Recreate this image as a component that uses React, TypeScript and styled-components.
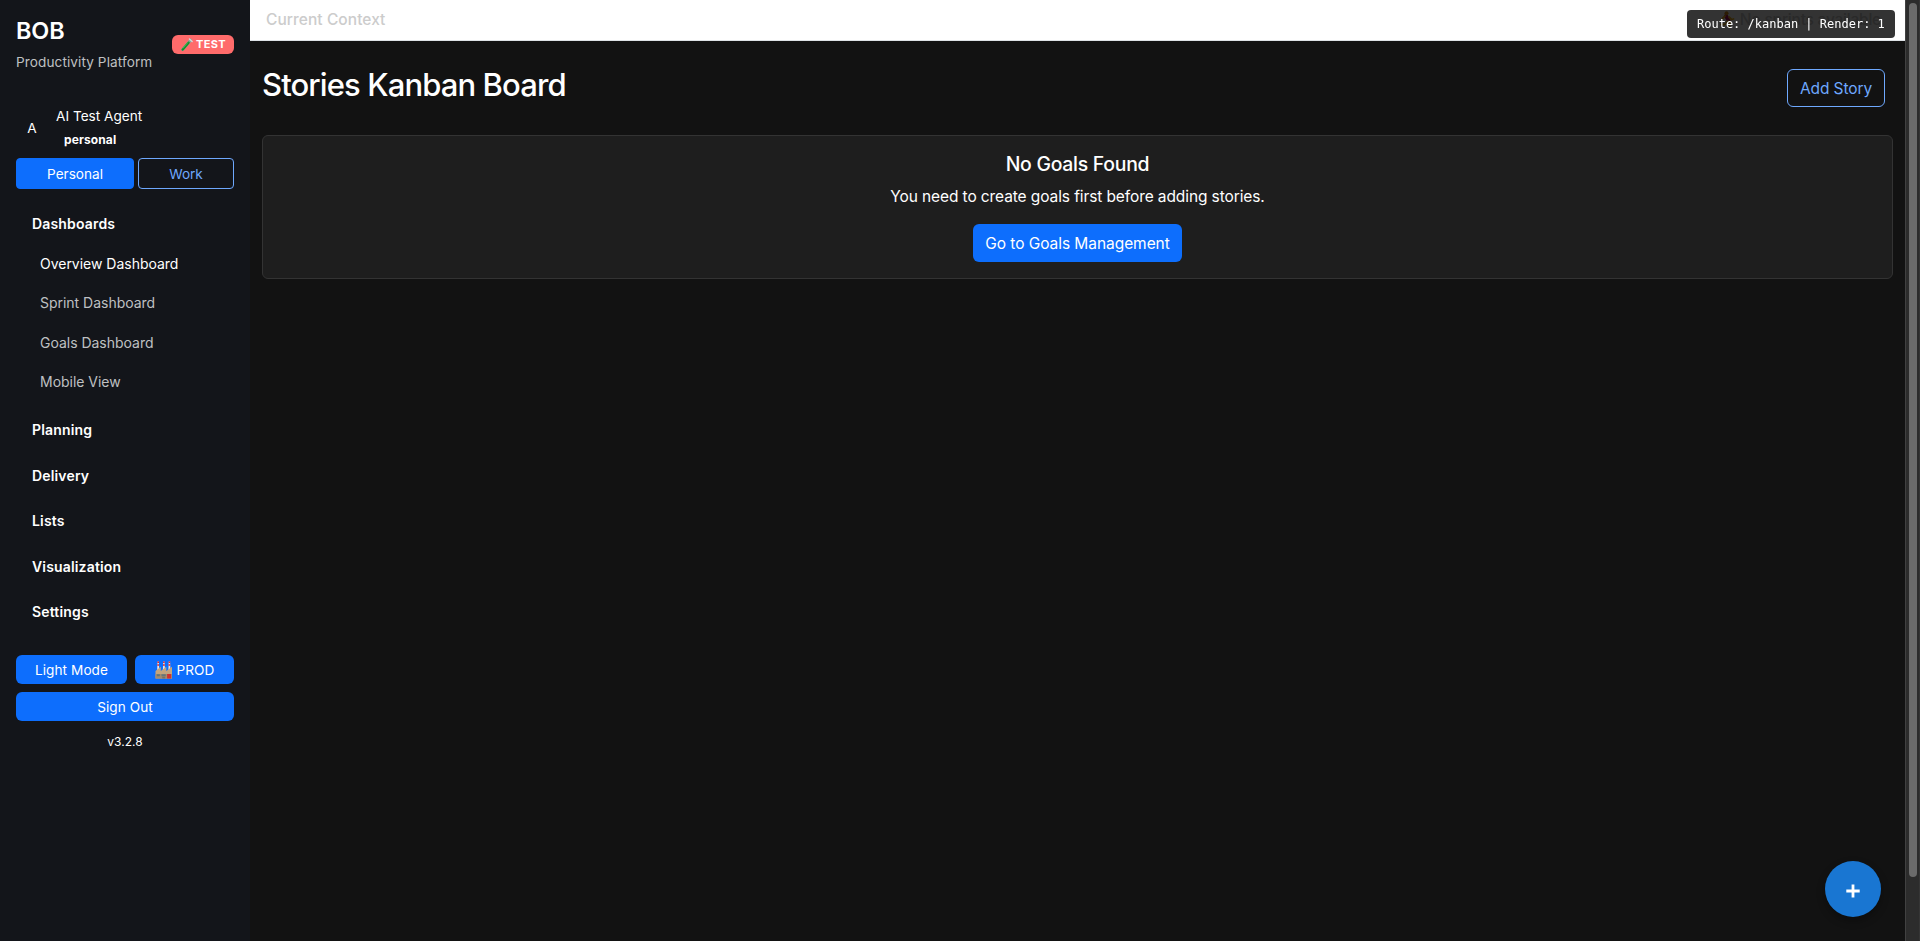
import React from 'react';
import styled, { createGlobalStyle, css } from 'styled-components';

const GlobalStyle = createGlobalStyle`
  *, *::before, *::after { box-sizing: border-box; }
  body {
    margin: 0;
    background: #121212;
    color: #fff;
    font-family: Inter, "Liberation Sans", sans-serif;
    font-size: 15.5px;
    line-height: 24px;
    overflow: hidden;
  }
  h1, h2, h3, p { margin: 0; }
  button { font-family: inherit; cursor: pointer; }
`;

const Shell = styled.div`
  display: flex;
  height: 941px;
`;

/* ---------- Sidebar ---------- */

const Sidebar = styled.aside`
  display: flex;
  flex-direction: column;
  flex: 0 0 250px;
  padding: 16px;
  background: #13151a;
`;

const BrandRow = styled.header`
  display: flex;
  align-items: center;
  justify-content: space-between;
  height: 57px;
`;

const BrandName = styled.h2`
  margin-bottom: 7px;
  font-size: 23.4px;
  font-weight: 600;
  line-height: 29px;
  letter-spacing: -0.1px;
`;

const BrandTagline = styled.p`
  color: #bfc0c2;
  font-size: 13.6px;
  line-height: 21px;
  letter-spacing: 0.09px;
`;

const EnvBadge = styled.span`
  display: flex;
  align-items: center;
  justify-content: center;
  gap: 2px;
  width: 62px;
  height: 19px;
  border-radius: 6px;
  background: #ff6b6b;
  font-size: 11px;
  font-weight: 700;
  line-height: 19px;
  letter-spacing: 0.32px;
`;

const UserRow = styled.div`
  display: flex;
  align-items: center;
  gap: 8px;
  height: 44px;
  margin-top: 33px;
`;

const Avatar = styled.span`
  width: 32px;
  text-align: center;
  font-size: 13.6px;
  line-height: 32px;
`;

const UserName = styled.div`
  font-size: 13.6px;
  line-height: 21px;
  letter-spacing: 0.02px;
`;

const PersonaTag = styled.div`
  padding: 3px 8px 0;
  font-size: 12px;
  font-weight: 700;
  line-height: 20px;
  letter-spacing: 0.12px;
`;

const PersonaSwitch = styled.div`
  display: flex;
  gap: 4px;
  margin-top: 8px;
`;

const PersonaButton = styled.button<{ $active?: boolean }>`
  flex: 0 0 ${(p) => (p.$active ? 118 : 96)}px;
  height: 31px;
  padding: 1px 0 0;
  border: 1px solid ${(p) => (p.$active ? '#0d6efd' : '#6ea8fe')};
  border-radius: 4px;
  background: ${(p) => (p.$active ? '#0d6efd' : 'transparent')};
  color: ${(p) => (p.$active ? '#fff' : '#6ea8fe')};
  font-size: 13.6px;
  line-height: 28px;
`;

const Nav = styled.nav`
  display: flex;
  flex-direction: column;
  gap: 4px;
  margin-top: 14px;
`;

const NavGroup = styled.section``;

const NavHeading = styled.h3`
  padding: 10px 16px;
  font-size: 14px;
  font-weight: 600;
  line-height: 21.4px;
  letter-spacing: 0.16px;
`;

const NavList = styled.div`
  margin-top: -0.4px;
  padding-bottom: 3.8px;
`;

const NavLink = styled.a<{ $active?: boolean }>`
  display: block;
  padding: 9px 24px;
  color: ${(p) => (p.$active ? '#fff' : '#bfc0c2')};
  font-size: 14px;
  line-height: 21.4px;
  letter-spacing: -0.02px;
`;

const SidebarActions = styled.div`
  display: grid;
  grid-template-columns: 111px 99px;
  gap: 8px;
  margin-top: 22.6px;
`;

const ActionButton = styled.button<{ $wide?: boolean }>`
  display: flex;
  align-items: center;
  justify-content: center;
  gap: 4px;
  height: 29px;
  padding: 0;
  border: 0;
  border-radius: 6px;
  background: #0d6efd;
  color: #fff;
  font-size: 13.6px;
  letter-spacing: 0.07px;
  ${(p) => p.$wide && css`grid-column: 1 / -1;`}
`;

const Version = styled.div`
  margin-top: 11px;
  text-align: center;
  font-size: 12px;
  line-height: 20px;
`;

/* ---------- Main area ---------- */

const Main = styled.main`
  flex: 1;
  min-width: 0;
`;

const ContextBar = styled.div`
  display: flex;
  align-items: center;
  justify-content: space-between;
  height: 41px;
  padding: 0 24px 0 16px;
  border-bottom: 1px solid #dee2e6;
  background: #fff;
  color: #ccc;
  font-weight: 500;
`;

const ContextLabel = styled.span`
  padding-bottom: 1px;
  letter-spacing: 0.06px;
`;

const SprintStatus = styled.span`
  display: flex;
  align-items: center;
  gap: 4px;
  letter-spacing: -0.22px;
`;

const Page = styled.div`
  padding: 28px 12px 0;
`;

const PageHeader = styled.div`
  display: flex;
  justify-content: space-between;
  height: 66px;
  padding-right: 8px;
`;

const PageTitle = styled.h1`
  font-size: 31px;
  font-weight: 500;
  line-height: 32px;
  letter-spacing: -0.89px;
`;

const OutlineButton = styled.button`
  width: 98px;
  height: 38px;
  padding: 0;
  border: 1px solid #6ea8fe;
  border-radius: 6px;
  background: transparent;
  color: #6ea8fe;
  font-size: 15.5px;
  letter-spacing: -0.1px;
`;

const EmptyCard = styled.section`
  display: flex;
  flex-direction: column;
  align-items: center;
  height: 144px;
  padding-top: 16px;
  border: 1px solid #333;
  border-radius: 6px;
  background: #1e1e1e;
`;

const EmptyTitle = styled.h2`
  margin-bottom: 9px;
  font-size: 19.4px;
  font-weight: 500;
  line-height: 24px;
  letter-spacing: -0.25px;
`;

const EmptyText = styled.p`
  margin-bottom: 15px;
  letter-spacing: -0.1px;
`;

const PrimaryButton = styled.button`
  width: 209px;
  height: 38px;
  padding: 0;
  border: 0;
  border-radius: 6px;
  background: #0d6efd;
  color: #fff;
  font-size: 15.5px;
  letter-spacing: -0.06px;
`;

/* ---------- Scrollbar and floating parts ---------- */

const ScrollTrack = styled.div`
  flex: 0 0 15px;
  padding: 3px 2px 0 3px;
  border-left: 1px solid #414141;
  border-right: 1px solid #353535;
  background: #2c2c2c;
`;

const ScrollThumb = styled.div`
  width: 8px;
  height: 874px;
  border-radius: 4px;
  background: #6b6b6b;
`;

const RouteBadge = styled.div`
  position: fixed;
  top: 10px;
  right: 25px;
  width: 208px;
  height: 28px;
  padding: 5px 10px;
  border-radius: 4px;
  background: rgba(0, 0, 0, 0.8);
  color: #fff;
  font-family: "DejaVu Sans Mono", monospace;
  font-size: 12px;
  line-height: 18px;
  white-space: pre;
`;

const AddFab = styled.button`
  position: fixed;
  right: 39px;
  bottom: 24px;
  display: flex;
  align-items: center;
  justify-content: center;
  width: 56px;
  height: 56px;
  padding: 4px 0 0;
  border: 0;
  border-radius: 50%;
  background: #1976d2;
  box-shadow: 0 4px 8px rgba(0, 0, 0, 0.3);
`;

/* ---------- Icons ---------- */

const TestTubeIcon = () => (
  <svg width="14" height="14" viewBox="0 0 14 14">
    <path d="M10.6 2.2 2.6 11.6" stroke="#8fa39a" strokeWidth="3" strokeLinecap="round" />
    <path d="M8.5 4.7 2.7 11.5" stroke="#168b2b" strokeWidth="2.4" strokeLinecap="round" />
    <path d="M7.8 4.6 3 10.2" stroke="#53c45a" strokeWidth="0.8" strokeLinecap="round" />
    <path d="m9.4 1 2.8 2.5" stroke="#d2dad8" strokeWidth="1.3" strokeLinecap="round" />
  </svg>
);

const FactoryIcon = () => (
  <svg width="18" height="18" viewBox="0 0 18 18">
    {[3.2, 8.9, 14.4].map((x) => (
      <g key={x}>
        <path d={`M${x - 1} 9 L${x - 0.7} 0.5 H${x + 0.7} L${x + 1} 9Z`} fill="#e9e4e4" />
        <path d={`M${x - 0.8} 0.4h1.6v1.5h-1.6zM${x - 0.9} 3.3h1.8v1.5h-1.8z`} fill="#e0262e" />
      </g>
    ))}
    <path d="M0.5 17.5V10L5.8 5.8V10L11.3 5.8V10L17 5.8V17.5Z" fill="#c3a47c" />
    <path d="M0.5 13H17V17.5H0.5Z" fill="#a58b6c" />
    <path d="M1.8 13.2h3v2h-3zM6.5 13.2h4.2v2H6.5z" fill="#61777c" />
    <path d="M12.1 13h4v4.5h-4z" fill="#cf3030" />
    <path d="M7.2 15.6h3v1.9h-3z" fill="#7b7165" />
  </svg>
);

const RunnerIcon = () => (
  <svg width="18" height="18" viewBox="0 0 18 18" fill="none" strokeLinecap="round" strokeLinejoin="round">
    <path d="m8 5 2.5 4" stroke="#b0105e" strokeWidth="4" />
    <path d="M7 5 4.5 7.5M11 6l2.5 2.5 2-.5M10 10l2 2-1 4M9 11l-2 2.5H3" stroke="#f5b51e" strokeWidth="1.8" />
    <circle cx="8.5" cy="2.3" r="2" fill="#d48a18" />
  </svg>
);

const PlusIcon = () => (
  <svg width="14" height="14" viewBox="0 0 14 14">
    <path d="M7 .5v13M.3 7h13.4" stroke="#fff" strokeWidth="2.8" />
  </svg>
);

const dashboards = ['Overview Dashboard', 'Sprint Dashboard', 'Goals Dashboard', 'Mobile View'];
const groups = ['Planning', 'Delivery', 'Lists', 'Visualization', 'Settings'];

export default function App() {
  return (
    <>
      <GlobalStyle />
      <Shell>
        <Sidebar>
          <BrandRow>
            <div>
              <BrandName>BOB</BrandName>
              <BrandTagline>Productivity Platform</BrandTagline>
            </div>
            <EnvBadge><TestTubeIcon />TEST</EnvBadge>
          </BrandRow>
          <UserRow>
            <Avatar>A</Avatar>
            <div>
              <UserName>AI Test Agent</UserName>
              <PersonaTag>personal</PersonaTag>
            </div>
          </UserRow>
          <PersonaSwitch>
            <PersonaButton $active>Personal</PersonaButton>
            <PersonaButton>Work</PersonaButton>
          </PersonaSwitch>
          <Nav>
            <NavGroup>
              <NavHeading>Dashboards</NavHeading>
              <NavList>
                {dashboards.map((label, i) => (
                  <NavLink key={label} $active={i === 0}>{label}</NavLink>
                ))}
              </NavList>
            </NavGroup>
            {groups.map((label) => (
              <NavGroup key={label}>
                <NavHeading>{label}</NavHeading>
              </NavGroup>
            ))}
          </Nav>
          <SidebarActions>
            <ActionButton>Light Mode</ActionButton>
            <ActionButton><FactoryIcon />PROD</ActionButton>
            <ActionButton $wide>Sign Out</ActionButton>
          </SidebarActions>
          <Version>v3.2.8</Version>
        </Sidebar>

        <Main>
          <ContextBar>
            <ContextLabel>Current Context</ContextLabel>
            <SprintStatus><RunnerIcon />No sprints available</SprintStatus>
          </ContextBar>
          <Page>
            <PageHeader>
              <PageTitle>Stories Kanban Board</PageTitle>
              <OutlineButton>Add Story</OutlineButton>
            </PageHeader>
            <EmptyCard>
              <EmptyTitle>No Goals Found</EmptyTitle>
              <EmptyText>You need to create goals first before adding stories.</EmptyText>
              <PrimaryButton>Go to Goals Management</PrimaryButton>
            </EmptyCard>
          </Page>
        </Main>

        <ScrollTrack><ScrollThumb /></ScrollTrack>
      </Shell>
      <RouteBadge>Route: /kanban | Render: 1</RouteBadge>
      <AddFab aria-label="Add"><PlusIcon /></AddFab>
    </>
  );
}
